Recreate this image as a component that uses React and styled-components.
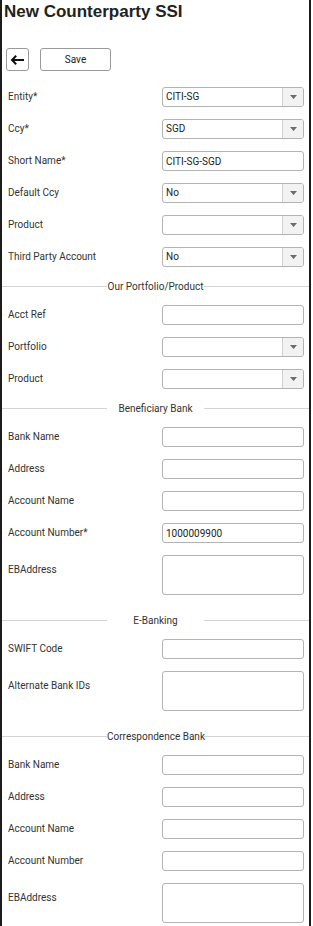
import React from 'react'
import styled, { createGlobalStyle } from 'styled-components'

const GlobalStyle = createGlobalStyle`
  html, body {
    margin: 0;
    padding: 0;
    background: #fff;
  }
  body {
    font-family: Roboto, 'Liberation Sans', Arial, sans-serif;
  }
`

const sections = [
  {
    title: null,
    rows: [
      { label: 'Entity*', kind: 'select', value: 'CITI-SG' },
      { label: 'Ccy*', kind: 'select', value: 'SGD' },
      { label: 'Short Name*', kind: 'input', value: 'CITI-SG-SGD' },
      { label: 'Default Ccy', kind: 'select', value: 'No' },
      { label: 'Product', kind: 'select', value: '' },
      { label: 'Third Party Account', kind: 'select', value: 'No' }
    ]
  },
  {
    title: 'Our Portfolio/Product',
    rows: [
      { label: 'Acct Ref', kind: 'input', value: '' },
      { label: 'Portfolio', kind: 'select', value: '' },
      { label: 'Product', kind: 'select', value: '' }
    ]
  },
  {
    title: 'Beneficiary Bank',
    rows: [
      { label: 'Bank Name', kind: 'input', value: '' },
      { label: 'Address', kind: 'input', value: '' },
      { label: 'Account Name', kind: 'input', value: '' },
      { label: 'Account Number*', kind: 'input', value: '1000009900' },
      { label: 'EBAddress', kind: 'textarea', value: '' }
    ]
  },
  {
    title: 'E-Banking',
    rows: [
      { label: 'SWIFT Code', kind: 'input', value: '' },
      { label: 'Alternate Bank IDs', kind: 'textarea', value: '' }
    ]
  },
  {
    title: 'Correspondence Bank',
    rows: [
      { label: 'Bank Name', kind: 'input', value: '' },
      { label: 'Address', kind: 'input', value: '' },
      { label: 'Account Name', kind: 'input', value: '' },
      { label: 'Account Number', kind: 'input', value: '' },
      { label: 'EBAddress', kind: 'textarea', value: '' }
    ]
  }
]

export default function App () {
  return (
    <>
      <GlobalStyle />
      <Frame>
        <Title>New Counterparty SSI</Title>
        <Toolbar>
          <IconButton aria-label='Back'>
            <svg width='15' height='10' viewBox='0 0 15 10'>
              <path d='M2 5h12' stroke='#111' strokeWidth='2' fill='none' />
              <path d='M6.2 0.8L2 5l4.2 4.2' stroke='#111' strokeWidth='2' fill='none' />
            </svg>
          </IconButton>
          <Button>Save</Button>
        </Toolbar>
        {sections.map((section, i) => (
          <Section key={i}>
            {section.title && (
              <Divider>
                <Line />
                <DividerLabel>{section.title}</DividerLabel>
                <Line />
              </Divider>
            )}
            {section.rows.map((row, j) => (
              <Row key={j} $tall={row.kind === 'textarea'}>
                <Label $tall={row.kind === 'textarea'}>{row.label}</Label>
                {row.kind === 'select' && (
                  <Select>
                    <SelectValue>{row.value}</SelectValue>
                    <Caret>
                      <svg width='7' height='4' viewBox='0 0 7 4'>
                        <path d='M0 0h7L3.5 4z' fill='#6b6b6b' />
                      </svg>
                    </Caret>
                  </Select>
                )}
                {row.kind === 'input' && <TextInput defaultValue={row.value} />}
                {row.kind === 'textarea' && <TextArea defaultValue={row.value} />}
              </Row>
            ))}
          </Section>
        ))}
      </Frame>
    </>
  )
}

const Frame = styled.div`
  box-sizing: border-box;
  width: 311px;
  min-height: 925px;
  border: 2px solid #1c1c1c;
  border-top: none;
  background: #fff;
`

const Title = styled.h1`
  margin: 0;
  padding: 2px 0 0 2px;
  font-family: 'Liberation Sans', Arial, sans-serif;
  font-size: 17px;
  font-weight: bold;
  line-height: 20px;
  color: #222;
`

const Toolbar = styled.div`
  display: flex;
  align-items: center;
  gap: 11px;
  margin-top: 26px;
  padding-left: 4px;
  margin-bottom: 16px;
`

const IconButton = styled.button`
  box-sizing: border-box;
  width: 23px;
  height: 23px;
  padding: 0;
  display: flex;
  align-items: center;
  justify-content: center;
  background: #fff;
  border: 1px solid #9a9a9a;
  border-radius: 3px;
`

const Button = styled.button`
  box-sizing: border-box;
  width: 71px;
  height: 23px;
  padding: 0;
  background: #fff;
  border: 1px solid #9a9a9a;
  border-radius: 3px;
  font-family: Roboto, sans-serif;
  font-size: 10px;
  color: #222;
`

const Section = styled.div`
  display: flex;
  flex-direction: column;
`

const Divider = styled.div`
  display: flex;
  align-items: center;
  height: 14px;
  margin-bottom: 12px;
`

const Line = styled.div`
  flex: 1;
  height: 1px;
  background: #d4d4d4;
`

const DividerLabel = styled.div`
  width: 97px;
  text-align: center;
  font-size: 10px;
  color: #333;
  white-space: nowrap;
`

const Row = styled.div`
  display: grid;
  grid-template-columns: 1fr 142px;
  align-items: start;
  padding: 0 5px 0 5px;
  margin-bottom: ${p => (p.$tall ? '18px' : '12px')};
`

const Label = styled.div`
  font-size: 10px;
  line-height: 20px;
  color: #333;
  padding-top: ${p => (p.$tall ? '5px' : '0')};
  padding-left: 1px;
`

const controlBase = `
  box-sizing: border-box;
  width: 142px;
  margin: 0;
  border: 1px solid #b3b3b3;
  border-radius: 3px;
  background: #fff;
  font-family: Roboto, sans-serif;
  font-size: 10px;
  color: #222;
`

const TextInput = styled.input`
  ${controlBase}
  height: 20px;
  padding: 0 3px;
  outline: none;
`

const TextArea = styled.textarea`
  ${controlBase}
  display: block;
  height: 40px;
  padding: 3px;
  resize: none;
  outline: none;
`

const Select = styled.div`
  ${controlBase}
  height: 20px;
  display: flex;
  overflow: hidden;
`

const SelectValue = styled.div`
  flex: 1;
  padding-left: 3px;
  line-height: 18px;
`

const Caret = styled.div`
  width: 20px;
  display: flex;
  align-items: center;
  justify-content: center;
  background: #f2f2f2;
  border-left: 1px solid #cfcfcf;
`
